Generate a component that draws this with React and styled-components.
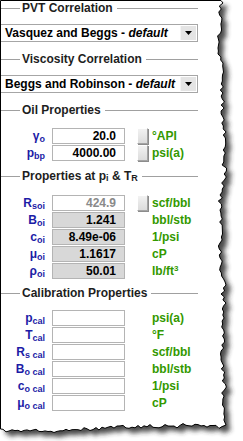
import React from "react";
import styled, { createGlobalStyle } from "styled-components";

const GlobalStyle = createGlobalStyle`
  html, body {
    margin: 0;
    padding: 0;
    background: #ffffff;
  }
  body {
    font-family: "Liberation Sans", Arial, sans-serif;
  }
`;

// torn paper edge, right and bottom
function seeded(seed) {
  let s = seed;
  return () => {
    s = (s * 9301 + 49297) % 233280;
    return s / 233280;
  };
}

function tornPath() {
  const rnd = seeded(11);
  let d = "M0.5,0.5 L221,0.5";
  let drift = 0;
  for (let y = 3; y <= 422; y += 3) {
    drift += (rnd() - 0.5) * 2.4;
    drift = Math.max(-3, Math.min(4, drift));
    const x = 221 + drift + (rnd() - 0.5) * 4;
    d += ` L${x.toFixed(1)},${y}`;
  }
  d += " L226,425";
  drift = 0;
  for (let x = 222; x >= 3; x -= 3) {
    drift += (rnd() - 0.5) * 2.2;
    drift = Math.max(-3, Math.min(3, drift));
    const y = 428 + drift + (rnd() - 0.5) * 3.5;
    d += ` L${x},${y.toFixed(1)}`;
  }
  d += " L0.5,429 Z";
  return d;
}

const TORN = tornPath();

const sections = {
  oil: [
    { main: "γ", sub: "o", value: "20.0", unit: "°API", button: true },
    { main: "p", sub: "bp", value: "4000.00", unit: "psi(a)", button: true },
  ],
  props: [
    { main: "R", sub: "soi", value: "424.9", unit: "scf/bbl", button: true, muted: true },
    { main: "B", sub: "oi", value: "1.241", unit: "bbl/stb", computed: true },
    { main: "c", sub: "oi", value: "8.49e-06", unit: "1/psi", computed: true },
    { main: "μ", sub: "oi", value: "1.1617", unit: "cP", computed: true },
    { main: "ρ", sub: "oi", value: "50.01", unit: "lb/ft", sup: "3", computed: true },
  ],
  cal: [
    { main: "p", sub: "cal", unit: "psi(a)" },
    { main: "T", sub: "cal", unit: "°F" },
    { main: "R", sub: "s cal", unit: "scf/bbl" },
    { main: "B", sub: "o cal", unit: "bbl/stb" },
    { main: "c", sub: "o cal", unit: "1/psi" },
    { main: "μ", sub: "o cal", unit: "cP" },
  ],
};

function FieldRows({ rows, top }) {
  return (
    <Rows $top={top}>
      {rows.map((r) => (
        <Row key={r.main + r.sub}>
          <Label>
            {r.main}
            <Sub>{r.sub}</Sub>
          </Label>
          <Field $computed={r.computed} $muted={r.muted}>
            {r.value}
          </Field>
          <SpinButton $hidden={!r.button} />
          <Unit>
            {r.unit}
            {r.sup && <Sup>{r.sup}</Sup>}
          </Unit>
        </Row>
      ))}
    </Rows>
  );
}

function DropArrow() {
  return (
    <Arrow>
      <svg width="7" height="4" viewBox="0 0 7 4">
        <path d="M0 0 H7 L3.5 4 Z" fill="#000" />
      </svg>
    </Arrow>
  );
}

export default function App() {
  return (
    <Page>
      <GlobalStyle />
      <Frame width="243" height="441">
        <defs>
          <filter id="shade" x="-10%" y="-10%" width="120%" height="120%">
            <feGaussianBlur stdDeviation="2.8" />
          </filter>
        </defs>
        <path d={TORN} transform="translate(5,5)" fill="#2a2a2a" opacity="0.85" filter="url(#shade)" />
        <path d={TORN} fill="#ffffff" stroke="#000000" strokeWidth="1" />
      </Frame>

      <Content>
        <Heading>PVT Correlation</Heading>
        <Select $top={8}>
          <SelectText>
            Vasquez and Beggs - <em>default</em>
          </SelectText>
          <DropArrow />
        </Select>

        <Heading $top={9}>Viscosity Correlation</Heading>
        <Select $top={8}>
          <SelectText>
            Beggs and Robinson - <em>default</em>
          </SelectText>
          <DropArrow />
        </Select>

        <Heading $top={9}>Oil Properties</Heading>
        <FieldRows rows={sections.oil} top={10} />

        <Heading $top={7}>
          Properties at p<Sub>i</Sub>&nbsp;&amp; T<Sub>R</Sub>
        </Heading>
        <FieldRows rows={sections.props} top={11} />

        <Heading $top={6}>Calibration Properties</Heading>
        <FieldRows rows={sections.cal} top={9} />
      </Content>
    </Page>
  );
}

const Page = styled.div`
  position: relative;
  width: 243px;
  height: 441px;
  overflow: hidden;
  background: #ffffff;
`;

const Frame = styled.svg`
  position: absolute;
  left: 0;
  top: 0;
`;

const Content = styled.div`
  position: relative;
  width: 197px;
  margin-left: 1px;
  display: flex;
  flex-direction: column;
`;

// section title with rule lines on both sides
const Heading = styled.div`
  display: flex;
  align-items: center;
  height: 16px;
  margin-top: ${(p) => p.$top || 0}px;
  font-size: 12px;
  font-weight: bold;
  color: #1e1e1e;
  white-space: nowrap;

  &::before {
    content: "";
    width: 19px;
    height: 1px;
    margin-right: 2px;
    background: #a0a0a0;
  }
  &::after {
    content: "";
    flex: 1;
    height: 1px;
    margin-left: 4px;
    background: #a0a0a0;
  }
`;

const Select = styled.div`
  display: flex;
  align-items: stretch;
  box-sizing: border-box;
  height: 18px;
  margin-top: ${(p) => p.$top || 0}px;
  border: 1px solid #a6a6a6;
  border-left: none;
  background: #ffffff;
`;

const SelectText = styled.div`
  flex: 1;
  display: flex;
  align-items: center;
  padding-left: 4px;
  font-size: 12px;
  font-weight: bold;
  color: #000000;
  white-space: pre;

  em {
    font-style: italic;
  }
`;

const Arrow = styled.div`
  display: flex;
  align-items: center;
  justify-content: center;
  width: 15px;
  margin: 1px;
  background: #e4e4e4;
  border-left: 1px solid #f4f4f4;
`;

const Rows = styled.div`
  display: flex;
  flex-direction: column;
  gap: 1px;
  margin-top: ${(p) => p.$top || 0}px;
`;

const Row = styled.div`
  display: flex;
  align-items: center;
  height: 16px;
`;

const Label = styled.div`
  width: 44px;
  text-align: right;
  font-size: 12px;
  font-weight: bold;
  color: #1c1ca6;
  white-space: nowrap;
`;

const Sub = styled.span`
  font-size: 9px;
  position: relative;
  top: 2px;
`;

const Sup = styled.span`
  font-size: 8px;
  position: relative;
  top: -4px;
`;

const Field = styled.div`
  box-sizing: border-box;
  width: 73px;
  height: 16px;
  margin-left: 7px;
  padding-right: 8px;
  border: 1px solid #b4b4b4;
  background: ${(p) => (p.$computed ? "#d8d8d8" : "#ffffff")};
  color: ${(p) => (p.$muted ? "#8a8a8a" : "#000000")};
  font-size: 12px;
  font-weight: bold;
  line-height: 14px;
  text-align: right;
`;

const SpinButton = styled.div`
  box-sizing: border-box;
  width: 11px;
  height: 16px;
  margin-left: 12px;
  visibility: ${(p) => (p.$hidden ? "hidden" : "visible")};
  background: linear-gradient(#f2f2f2, #dcdcdc);
  border: 1px solid #a4a4a4;
  border-top-color: #ffffff;
  border-left-color: #ffffff;
  box-shadow: 1px 1px 0 #8c8c8c;
`;

const Unit = styled.div`
  margin-left: 4px;
  font-size: 12px;
  font-weight: bold;
  color: #339900;
  white-space: nowrap;
`;
